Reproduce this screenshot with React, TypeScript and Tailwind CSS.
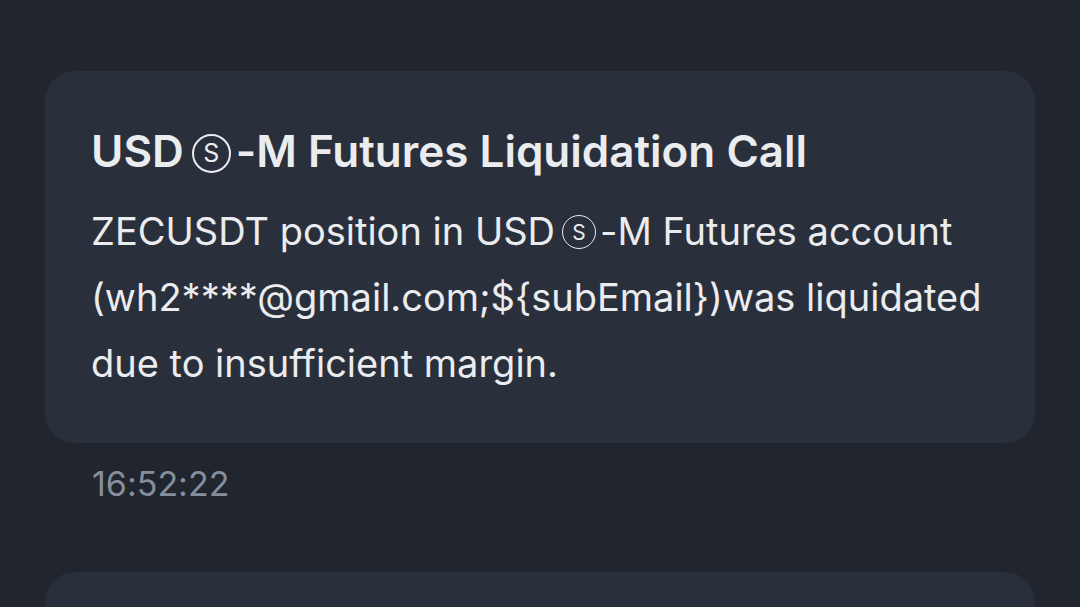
import React from "react";

const CircS = ({ size }: { size: "lg" | "md" }) =>
  size === "lg" ? (
    <span className="inline-flex items-center justify-center w-[39px] h-[39px] rounded-full border-[2px] border-[#eaecef] text-[25px] leading-none align-[5px] ml-[8px] mr-[5px] font-normal">
      S
    </span>
  ) : (
    <span className="inline-flex items-center justify-center w-[34px] h-[34px] rounded-full border-[1.5px] border-[#eaecef] text-[21px] leading-none align-[5px] ml-[7px] mr-[4px] font-normal">
      S
    </span>
  );

export default function App() {
  return (
    <div className="w-[1080px] h-[607px] overflow-hidden bg-[#20252e] pl-[45px] pr-[45px] pt-[71px] font-['Inter','Liberation_Sans',sans-serif] text-[#eaecef] [font-variant-ligatures:none]">
      <div className="rounded-[30px] bg-[#2a303b] pl-[46px] pr-[40px] pt-[54px] pb-[47px]">
        <div className="text-[44px] font-semibold leading-[1.2]">
          USD<CircS size="lg" />-M Futures Liquidation Call
        </div>
        <div className="mt-[20px] text-[38px] leading-[66px]">
          ZECUSDT position in USD<CircS size="md" />-M Futures account (wh2****@gmail.com;${"{subEmail}"})was liquidated due to insufficient margin.
        </div>
      </div>
      <div className="mt-[21px] pl-[47px] text-[34px] leading-[1.2] text-[#848e9c]">16:52:22</div>
      <div className="mt-[67px] h-[200px] rounded-[30px] bg-[#2a303b]" />
    </div>
  );
}
